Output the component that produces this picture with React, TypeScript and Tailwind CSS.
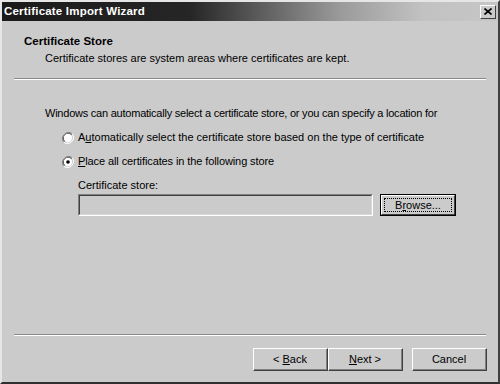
const font = { fontFamily: '"Liberation Sans", Arial, sans-serif' };

function Radio({ checked }: { checked?: boolean }) {
  return (
    <svg width="12" height="12" viewBox="0 0 12 12" className="shrink-0">
      <path d="M10.2 1.8 A6 6 0 0 0 1.8 10.2" fill="none" stroke="#808080" strokeWidth="1" />
      <path d="M9.5 2.5 A5 5 0 0 0 2.5 9.5" fill="none" stroke="#404040" strokeWidth="1" />
      <circle cx="6" cy="6" r="4.2" fill="#ffffff" />
      <path d="M1.8 10.2 A6 6 0 0 0 10.2 1.8" fill="none" stroke="#ffffff" strokeWidth="1" />
      {checked && <circle cx="6" cy="6" r="1.8" fill="#000000" />}
    </svg>
  );
}

function WinButton({
  children,
  className = "",
  focused = false,
}: {
  children: React.ReactNode;
  className?: string;
  focused?: boolean;
}) {
  if (focused) {
    return (
      <div className={`border border-black ${className}`}>
        <div className="h-full border-t border-l border-t-white border-l-white border-r border-b border-r-[#404040] border-b-[#404040] flex p-[2px]">
          <div className="flex-1 border border-dotted border-black flex items-center justify-center text-[11px] text-black">
            {children}
          </div>
        </div>
      </div>
    );
  }
  return (
    <div
      className={`border-t border-l border-t-white border-l-white border-r border-b border-r-[#404040] border-b-[#404040] ${className}`}
    >
      <div className="h-full border-r border-b border-r-[#808080] border-b-[#808080] flex items-center justify-center text-[11px] text-black whitespace-pre">
        {children}
      </div>
    </div>
  );
}

export default function App() {
  return (
    <div
      className="w-[500px] h-[384px] bg-[#cbcbcb] flex flex-col border-t-2 border-l-2 border-t-[#e6e6e6] border-l-[#e6e6e6] border-r-2 border-b-2 border-r-[#404040] border-b-[#303030] overflow-hidden"
      style={font}
    >
      {/* Title bar */}
      <div className="h-[19px] shrink-0 flex items-center justify-between pl-[2px] pr-[2px] bg-[linear-gradient(90deg,#1a1a1a_0%,#262626_38%,#9a9a9a_68%,#c2c2c2_85%,#c6c6c6_100%)]">
        <span className="text-white font-bold text-[11.5px] leading-none tracking-[0.2px]">
          Certificate Import Wizard
        </span>
        <div className="w-[16px] h-[14px] bg-[#cbcbcb] border-t border-l border-t-white border-l-white border-r border-b border-r-[#404040] border-b-[#404040] flex items-center justify-center">
          <svg width="8" height="7" viewBox="0 0 8 7">
            <path d="M0.5 0.5 L7.5 6.5 M7.5 0.5 L0.5 6.5" stroke="#000" strokeWidth="1.6" />
          </svg>
        </div>
      </div>

      {/* Header */}
      <div className="h-[57px] shrink-0 flex flex-col pl-[22px] pt-[13px]">
        <div className="text-[11.5px] font-bold text-black leading-[14px]">
          Certificate Store
        </div>
        <div className="text-[11px] text-black leading-[13px] mt-[4px] pl-[21px]">
          Certificate stores are system areas where certificates are kept.
        </div>
      </div>
      <div className="shrink-0 mx-[12px] border-t border-t-[#8a8a8a] border-b border-b-white" />

      {/* Body */}
      <div className="flex-1 flex flex-col pl-[43px] pt-[27px]">
        <div className="text-[11px] text-black leading-[13px] tracking-[-0.23px]">
          Windows can automatically select a certificate store, or you can specify a location for
        </div>
        <div className="flex items-center gap-[4px] pl-[17px] mt-[11px]">
          <Radio />
          <span className="text-[11px] text-black leading-[13px]">
            A<span className="underline">u</span>tomatically select the certificate store based on the type of certificate
          </span>
        </div>
        <div className="flex items-center gap-[4px] pl-[17px] mt-[11px]">
          <Radio checked />
          <span className="text-[11px] text-black leading-[13px] tracking-[-0.1px]">
            <span className="underline">P</span>lace all certificates in the following store
          </span>
        </div>
        <div className="pl-[33px] mt-[11px] flex flex-col">
          <span className="text-[11px] text-black leading-[13px]">Certificate store:</span>
          <div className="flex items-center mt-[2px]">
            <div className="w-[295px] h-[22px] border-t border-l border-t-[#808080] border-l-[#808080] border-r border-b border-r-white border-b-white">
              <div className="h-full border-t border-l border-t-[#404040] border-l-[#404040] border-r border-b border-r-[#d8d8d8] border-b-[#d8d8d8] bg-[#cbcbcb]" />
            </div>
            <WinButton focused className="w-[76px] h-[22px] ml-[7px]">
              B<span className="underline">r</span>owse...
            </WinButton>
          </div>
        </div>
      </div>

      {/* Bottom */}
      <div className="shrink-0 mx-[12px] border-t border-t-[#8a8a8a] border-b border-b-white" />
      <div className="h-[46px] shrink-0 flex items-start justify-end pr-[11px] pt-[12px]">
        <WinButton className="w-[75px] h-[23px]">
          {"< "}
          <span className="underline">B</span>ack
        </WinButton>
        <WinButton className="w-[75px] h-[23px]">
          <span className="underline">N</span>
          {"ext >"}
        </WinButton>
        <WinButton className="w-[75px] h-[23px] ml-[9px]">Cancel</WinButton>
      </div>
    </div>
  );
}
